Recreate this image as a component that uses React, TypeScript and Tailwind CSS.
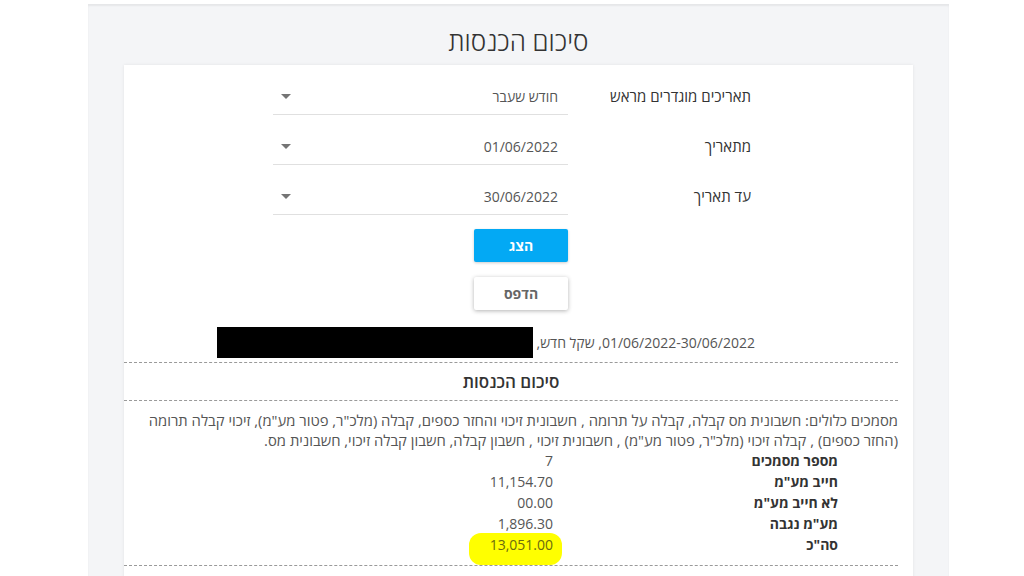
import React from "react";

const font = { fontFamily: '"Open Sans", "Noto Sans", "DejaVu Sans", sans-serif' };

function Caret() {
  return (
    <svg width="10" height="5" viewBox="0 0 10 5" className="shrink-0">
      <path d="M0 0 L10 0 L5 5 Z" fill="#757575" />
    </svg>
  );
}

function Row({ label, value }: { label: string; value: string }) {
  return (
    <div className="flex h-[50px] items-start">
      <div className="w-[183px] pt-[19px] text-[15px] leading-[22px] text-[#333]">{label}</div>
      <div className="flex h-[49px] w-[295px] items-center justify-between border-b border-[#e0e0e0] pr-[10px] pl-[8px] pt-[13px]">
        <span className="text-[14px] leading-[22px] text-[#555]">{value}</span>
        <Caret />
      </div>
    </div>
  );
}

const dashed = "border-t border-dashed border-[#9a9a9a] mr-[15px]";

export default function App() {
  return (
    <div dir="rtl" style={font} className="min-h-[576px] w-[1024px] overflow-hidden bg-white">
      <div className="mr-[75px] ml-[88px] mt-[4px] h-[572px] bg-[#f4f5f7] shadow-[inset_0_2px_2px_rgba(0,0,0,0.06)]">
        <h1 className="pt-[20px] text-center text-[26px] font-light leading-[34px] text-[#333]">סיכום הכנסות</h1>
        <div className="mx-[36px] mt-[7px] h-[520px] bg-white shadow-[0_0_3px_rgba(0,0,0,0.08)]">
          <div className="mr-[162px] pt-[1px]">
            <Row label="תאריכים מוגדרים מראש" value="חודש שעבר" />
            <Row label="מתאריך" value="01/06/2022" />
            <Row label="עד תאריך" value="30/06/2022" />
            <div className="mr-[183px] flex flex-col gap-[15px] pt-[13px]">
              <button className="h-[33px] w-[94px] rounded-[2px] bg-[#03a9f4] text-[14px] font-bold text-white shadow-[0_1px_3px_rgba(0,0,0,0.2)]">הצג</button>
              <button className="h-[33px] w-[94px] rounded-[2px] bg-white text-[14px] font-bold text-[#666] shadow-[0_1px_4px_rgba(0,0,0,0.3)]">הדפס</button>
            </div>
          </div>
          <div className="mr-[158px] mt-[17px] flex h-[31px] items-center text-[14px] text-[#555]">
            <span>01/06/2022-30/06/2022, שקל חדש,</span>
            <span className="mr-[4px] h-[31px] w-[316px] bg-black" />
          </div>
          <div className={`${dashed} mt-[4px]`} />
          <div className="mr-[15px] flex h-[37px] items-center justify-center text-[17px] font-semibold text-[#333]">סיכום הכנסות</div>
          <div className={dashed} />
          <p className="mr-[15px] ml-[16px] pt-[9px] text-[14.8px] leading-[20px] text-[#555]">
            מסמכים כלולים: חשבונית מס קבלה, קבלה על תרומה , חשבונית זיכוי והחזר כספים, קבלה (מלכ"ר, פטור מע"מ), זיכוי קבלה תרומה (החזר כספים) , קבלה זיכוי (מלכ"ר, פטור מע"מ) , חשבונית זיכוי , חשבון קבלה, חשבון קבלה זיכוי, חשבונית מס.
          </p>
          <div className="mr-[75px] grid grid-cols-[285px_auto] text-[14px] leading-[21px]">
            <div className="font-bold text-[#333]">מספר מסמכים</div>
            <div className="text-[#555]">7</div>
            <div className="font-bold text-[#333]">חייב מע"מ</div>
            <div className="text-[#555]">11,154.70</div>
            <div className="font-bold text-[#333]">לא חייב מע"מ</div>
            <div className="text-[#555]">00.00</div>
            <div className="font-bold text-[#333]">מע"מ נגבה</div>
            <div className="text-[#555]">1,896.30</div>
            <div className="font-bold text-[#333]">סה"כ</div>
            <div>
              <span className="relative inline-block text-[#6b6b10]">
                <span className="absolute -top-[1px] -right-[9px] -bottom-[10px] -left-[21px] rounded-[12px] bg-[#ffff00]" />
                <span className="relative">13,051.00</span>
              </span>
            </div>
          </div>
          <div className={`${dashed} mt-[10px]`} />
        </div>
      </div>
    </div>
  );
}
